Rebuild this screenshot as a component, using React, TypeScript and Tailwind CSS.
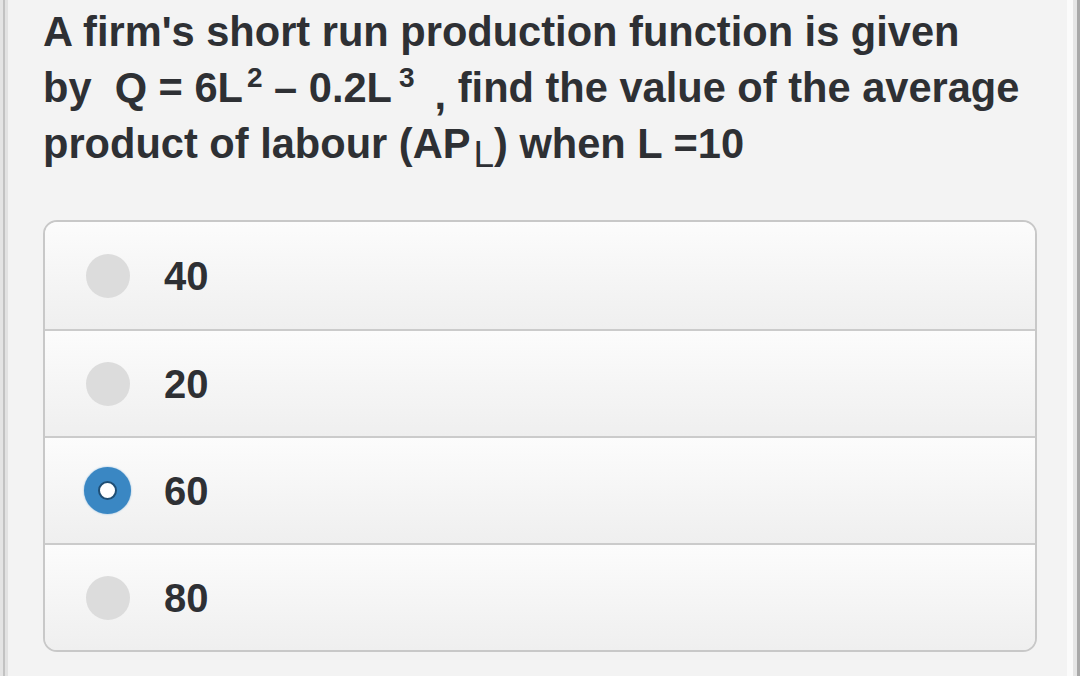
import React from "react";

const options = [
  { label: "40", selected: false },
  { label: "20", selected: false },
  { label: "60", selected: true },
  { label: "80", selected: false },
];

function Radio({ selected }: { selected: boolean }) {
  if (selected) {
    return (
      <div className="flex h-[47px] w-[47px] items-center justify-center rounded-full bg-[#3a87c3] shadow-[0_0_2px_#7fb3dc]">
        <div className="h-[19px] w-[19px] rounded-full border-[2px] border-[#1f4e74] bg-white" />
      </div>
    );
  }
  return <div className="h-[44px] w-[44px] rounded-full bg-[#dcdcdc]" />;
}

export default function App() {
  return (
    <div
      className="flex h-[676px] w-[1080px] bg-[#f3f3f3] text-[#2e3034]"
      style={{ fontFamily: '"Liberation Sans", Arial, sans-serif' }}
    >
      <div className="w-[3px] bg-[#e4e4e4]" />
      <div className="w-[2px] bg-[#c2c2c2]" />
      <div className="w-[3px] bg-[#e2e2e2]" />
      <div className="flex flex-1 flex-col pl-[35px] pr-[20px] pt-[4px]">
        <div className="text-[41.6px] font-bold leading-[56px]">
          <div className="h-[56px] whitespace-nowrap">A firm's short run production function is given</div>
          <div className="h-[56px] whitespace-pre">
            by{"  "}Q = 6L
            <span className="relative top-[-15px] ml-[4px] text-[28px] leading-none">2</span>
            {" "}– 0.2L
            <span className="relative top-[-15px] ml-[7px] text-[28px] leading-none">3</span>
            <span className="relative top-[7px] ml-[20px] leading-none">,</span> find the value of the average
          </div>
          <div className="h-[56px] whitespace-pre">
            product of labour (AP
            <span className="relative top-[9px] ml-[3px] text-[37px] font-normal leading-none">L</span>) when L =10
          </div>
        </div>
        <div className="mt-[48px] flex w-[994px] flex-col overflow-hidden rounded-[14px] border-[2px] border-[#c8c8c8]">
          {options.map((o, i) => (
            <div
              key={o.label}
              className={
                "flex h-[107px] items-center bg-gradient-to-b from-[#fcfcfc] to-[#efefef] pl-[39px] " +
                (i > 0 ? "border-t-[2px] border-[#cbcbcb]" : "")
              }
            >
              <div className="flex w-[47px] items-center justify-center">
                <Radio selected={o.selected} />
              </div>
              <span className="ml-[33px] text-[40px] font-bold">{o.label}</span>
            </div>
          ))}
        </div>
      </div>
      <div className="w-[6px] bg-[#fbfbfb]" />
      <div className="w-[4px] bg-[#e6e6e6]" />
      <div className="w-[3px] bg-[#a9a9a9]" />
    </div>
  );
}
